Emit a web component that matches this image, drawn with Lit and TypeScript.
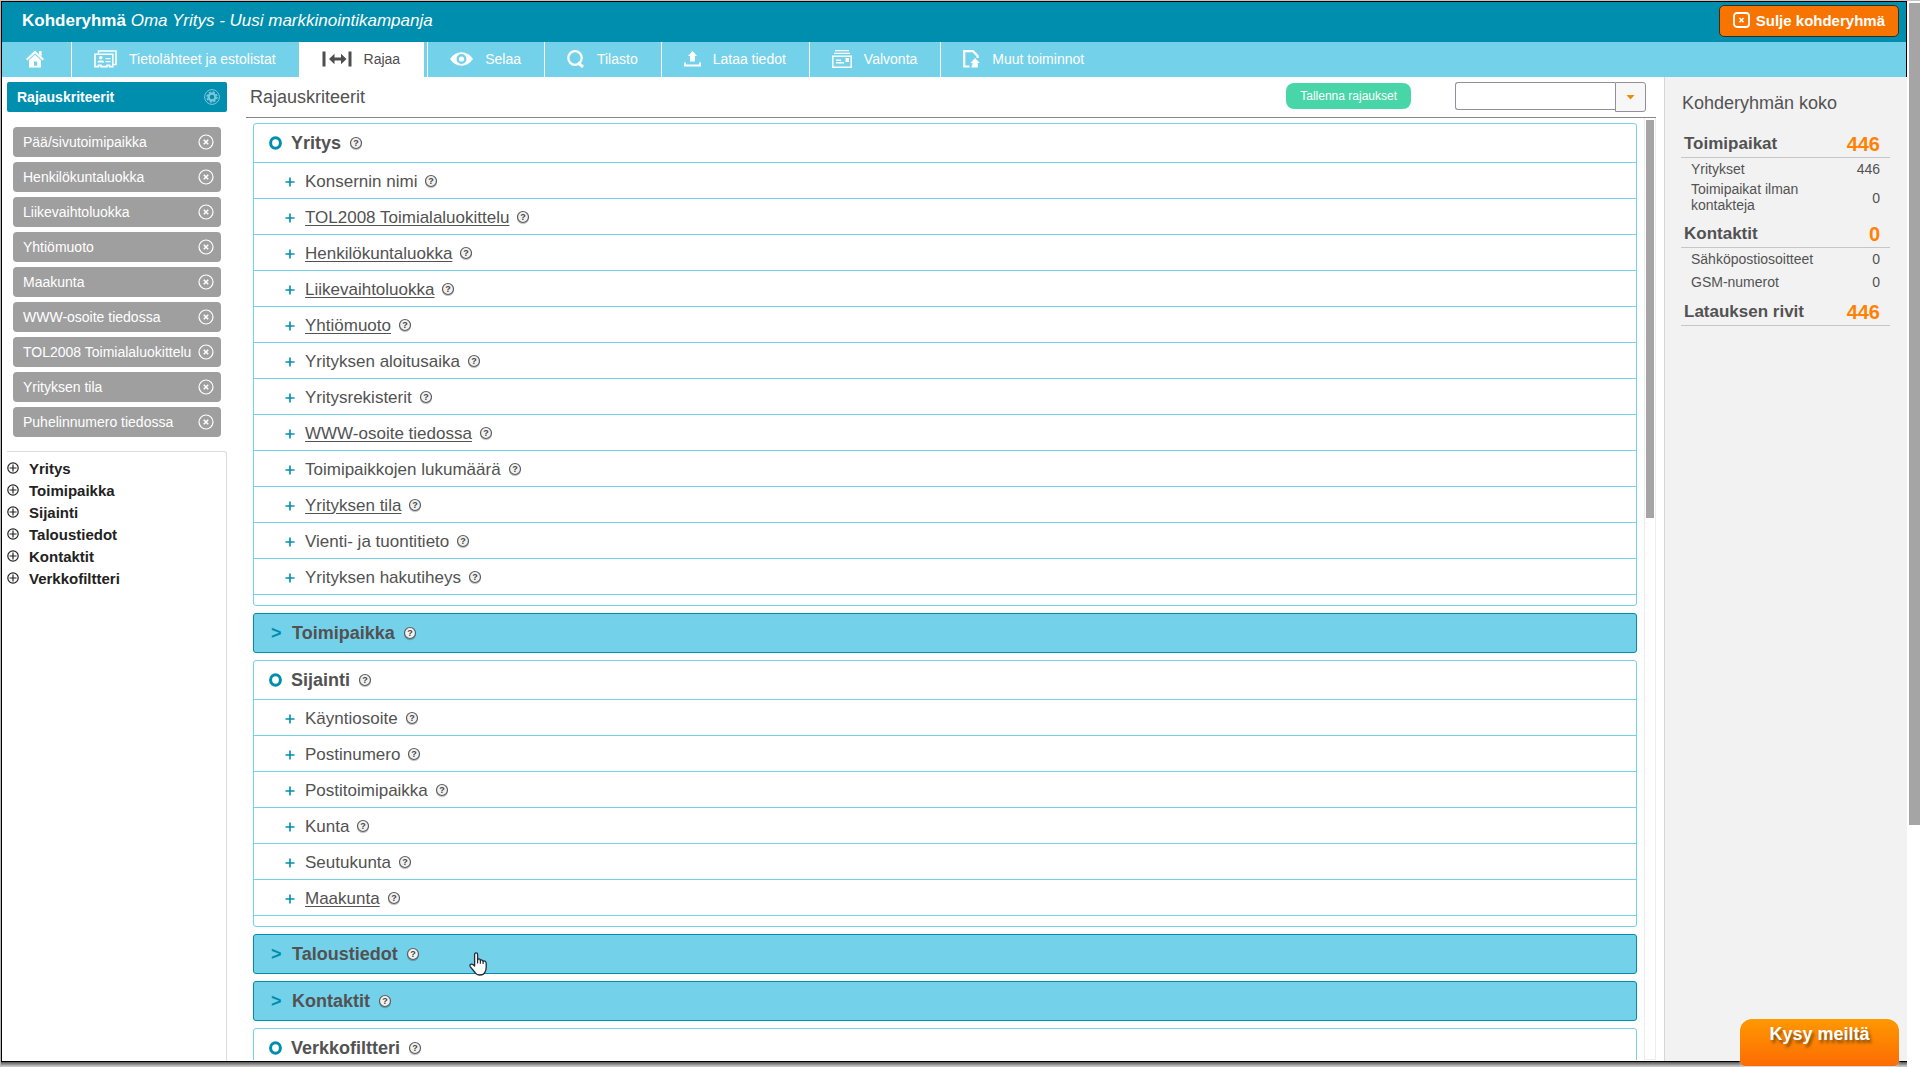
import { LitElement, html, svg, css, nothing } from "lit";
import { customElement, property } from "lit/decorators.js";
import { classMap } from "lit/directives/class-map.js";

interface Criterion {
  name: string;
  active?: boolean;
}
interface Group {
  name: string;
  open: boolean;
  items: Criterion[];
  pointer?: boolean;
}

const on = (name: string): Criterion => ({ name, active: true });
const off = (name: string): Criterion => ({ name });

const GROUPS: Group[] = [
  {
    name: "Yritys",
    open: true,
    items: [
      off("Konsernin nimi"),
      on("TOL2008 Toimialaluokittelu"),
      on("Henkilökuntaluokka"),
      on("Liikevaihtoluokka"),
      on("Yhtiömuoto"),
      off("Yrityksen aloitusaika"),
      off("Yritysrekisterit"),
      on("WWW-osoite tiedossa"),
      off("Toimipaikkojen lukumäärä"),
      on("Yrityksen tila"),
      off("Vienti- ja tuontitieto"),
      off("Yrityksen hakutiheys"),
    ],
  },
  { name: "Toimipaikka", open: false, items: [] },
  {
    name: "Sijainti",
    open: true,
    items: [
      off("Käyntiosoite"),
      off("Postinumero"),
      off("Postitoimipaikka"),
      off("Kunta"),
      off("Seutukunta"),
      on("Maakunta"),
    ],
  },
  { name: "Taloustiedot", open: false, items: [], pointer: true },
  { name: "Kontaktit", open: false, items: [] },
  { name: "Verkkofiltteri", open: true, items: [] },
];

const CHIPS = [
  "Pää/sivutoimipaikka",
  "Henkilökuntaluokka",
  "Liikevaihtoluokka",
  "Yhtiömuoto",
  "Maakunta",
  "WWW-osoite tiedossa",
  "TOL2008 Toimialaluokittelu",
  "Yrityksen tila",
  "Puhelinnumero tiedossa",
];

const TREE = ["Yritys", "Toimipaikka", "Sijainti", "Taloustiedot", "Kontaktit", "Verkkofiltteri"];

const TOTALS = [
  {
    name: "Toimipaikat",
    value: 446,
    rows: [
      ["Yritykset", 446],
      ["Toimipaikat ilman kontakteja", 0],
    ],
  },
  {
    name: "Kontaktit",
    value: 0,
    rows: [
      ["Sähköpostiosoitteet", 0],
      ["GSM-numerot", 0],
    ],
  },
  { name: "Latauksen rivit", value: 446, rows: [] },
];

const icon = (w: number, h: number, body: unknown) =>
  html`<svg width=${w} height=${h} viewBox="0 0 ${w} ${h}" aria-hidden="true">${body}</svg>`;

const ICONS: Record<string, unknown> = {
  home: icon(18, 18, svg`
    <path d="M9 0.5 L18 9 L16.6 10.4 L9 3.4 L1.4 10.4 L0 9 Z M13 1h2.6v5.5l-2.6-2.4z" fill="currentColor"/>
    <path fill-rule="evenodd" d="M3 10.2 L9 4.8 L15 10.2 V17.5 H3 Z M8 11.5 V15.8 H11.2 V11.5 Z" fill="currentColor"/>`),
  cards: icon(23, 18, svg`
    <path d="M4.5 3.5V1H22V14.5H19.5" fill="none" stroke="currentColor" stroke-width="1.6"/>
    <path d="M1 4.2H18.8V16.6H15.5V15.2H13V16.6H7V15.2H4.5V16.6H1Z" fill="none" stroke="currentColor" stroke-width="1.6"/>
    <circle cx="6.8" cy="7.8" r="1.8" fill="currentColor"/>
    <path d="M3.5 12.6Q3.5 10.6 5.6 10.6H8Q10.2 10.6 10.2 12.6Z" fill="currentColor"/>
    <path d="M11.5 8.6H16.5M11.5 11.6H16.5" stroke="currentColor" stroke-width="1.4"/>`),
  limit: icon(30, 16, svg`
    <path d="M0.5 0.5H3.5V15.5H0.5ZM26.5 0.5H29.5V15.5H26.5Z" fill="currentColor"/>
    <path d="M7 8L12.5 2.8V6.6H19V2.8L24.5 8L19 13.2V9.4H12.5V13.2Z" fill="currentColor"/>`),
  eye: icon(23, 14, svg`
    <path fill-rule="evenodd" d="M0 7Q4.5 0.3 11.5 0.3T23 7Q18.5 13.7 11.5 13.7T0 7Z M11.5 2A5 5 0 1 0 11.5 12A5 5 0 1 0 11.5 2Z" fill="currentColor"/>
    <circle cx="11.5" cy="7" r="2.6" fill="currentColor"/>`),
  search: icon(18, 18, svg`
    <ellipse cx="8" cy="8" rx="6.7" ry="6.9" fill="none" stroke="currentColor" stroke-width="2.2"/>
    <path d="M10.8 12.6L16 17" stroke="currentColor" stroke-width="3"/>`),
  upload: icon(17, 16, svg`
    <path d="M8.5 0L13 5H11V10.5H6V5H4Z" fill="currentColor"/>
    <path d="M1 11.5V14.5H16V11.5" fill="none" stroke="currentColor" stroke-width="2"/>`),
  mail: icon(20, 18, svg`
    <path d="M3 0.6H17M2 3.4H18" stroke="currentColor" stroke-width="1.2"/>
    <path d="M0.8 6.2H19.2V17.2H0.8Z" fill="none" stroke="currentColor" stroke-width="1.5"/>
    <path d="M4 10.2H9M4 12.8H12" stroke="currentColor" stroke-width="1.4"/>
    <path d="M13.5 8H17V12H13.5Z" fill="currentColor"/>`),
  page: icon(17, 18, svg`
    <path d="M6.5 16.5H1.2V1.2H10L14.6 6V8" fill="none" stroke="currentColor" stroke-width="2.2"/>
    <path d="M12 8L16.8 13H14.8V17.6H8.5V15.5H9.4V13H7.4Z" fill="currentColor"/>`),
};

const TABS = [
  { icon: "home", label: "", title: "Etusivu" },
  { icon: "cards", label: "Tietolähteet ja estolistat" },
  { icon: "limit", label: "Rajaa", active: true },
  { icon: "eye", label: "Selaa" },
  { icon: "search", label: "Tilasto" },
  { icon: "upload", label: "Lataa tiedot" },
  { icon: "mail", label: "Valvonta" },
  { icon: "page", label: "Muut toiminnot" },
];

const reset = css`
  * {
    box-sizing: border-box;
  }
  button {
    font: inherit;
    color: inherit;
    background: none;
    border: 0;
    margin: 0;
    padding: 0;
    cursor: pointer;
    text-align: left;
  }
  svg {
    display: block;
    flex: none;
  }
  h1,
  h2,
  h3,
  ul {
    margin: 0;
    padding: 0;
    font-weight: inherit;
    font-size: inherit;
    list-style: none;
  }
`;

@customElement("help-button")
export class HelpButton extends LitElement {
  @property() topic = "";

  static styles = [
    reset,
    css`
      :host {
        display: flex;
      }
      .mark {
        font: bold 9px "Liberation Sans", sans-serif;
        fill: #444;
      }
    `,
  ];

  render() {
    return html`<button aria-label="Ohje: ${this.topic}">
      <svg width="14" height="15" viewBox="0 0 14 15">
        <circle cx="7" cy="8.2" r="6" fill="#000" opacity="0.22" />
        <circle cx="7" cy="7" r="5.5" fill="#f1f1f1" stroke="#5c5c5c" stroke-width="1.2" />
        <text class="mark" x="7" y="10" text-anchor="middle">?</text>
      </svg>
    </button>`;
  }
}

@customElement("criteria-group")
export class CriteriaGroup extends LitElement {
  @property({ attribute: false }) group!: Group;

  static styles = [
    reset,
    css`
      :host {
        display: block;
        flex: none;
      }
      .card {
        border: 1px solid #74d1ea;
        border-radius: 3px;
        padding-bottom: 10px;
        color: #525252;
        background: #fff;
      }
      .card.closed {
        position: relative;
        border-color: #008eae;
        background: #74d1ea;
        padding-bottom: 0;
      }
      .head {
        display: flex;
        align-items: center;
        gap: 8px;
        height: 38px;
        padding-left: 15px;
      }
      .toggle {
        display: flex;
        align-items: center;
        gap: 9px;
        font-size: 18px;
        font-weight: bold;
        line-height: 22px;
      }
      .closed .toggle {
        gap: 11px;
      }
      .chevron {
        width: 12px;
        padding-left: 2px;
        color: #008eae;
      }
      .item {
        display: flex;
        align-items: center;
        gap: 7px;
        height: 36px;
        padding: 2px 0 0 31px;
        border-top: 1px solid #74d1ea;
      }
      .item:last-child {
        height: 37px;
        border-bottom: 1px solid #74d1ea;
      }
      .pick {
        display: flex;
        align-items: center;
        gap: 10px;
        font-size: 17px;
        line-height: 20px;
      }
      .active {
        text-decoration: underline;
        text-decoration-thickness: 1px;
        text-underline-offset: 2px;
      }
      .hand {
        position: absolute;
        left: 215px;
        top: 17px;
      }
    `,
  ];

  render() {
    const { name, open, items, pointer } = this.group;
    return html`<section class=${classMap({ card: true, closed: !open })}>
      <div class="head">
        <button class="toggle" aria-expanded=${open}>
          ${open
            ? html`<svg width="13" height="14" viewBox="0 0 13 14" aria-hidden="true">
                <ellipse cx="6.5" cy="7" rx="4.9" ry="5.2" fill="none" stroke="#008eae" stroke-width="3" />
              </svg>`
            : html`<span class="chevron" aria-hidden="true">&gt;</span>`}
          <span>${name}</span>
        </button>
        <help-button .topic=${name}></help-button>
      </div>
      ${items.length
        ? html`<ul>
            ${items.map(
              (item) => html`<li class="item">
                <button class="pick">
                  <svg width="10" height="10" viewBox="0 0 10 10" aria-hidden="true">
                    <path d="M5 0.5V9.5M0.5 5H9.5" stroke="#008eae" stroke-width="1.6" />
                  </svg>
                  <span class=${classMap({ active: !!item.active })}>${item.name}</span>
                </button>
                <help-button .topic=${item.name}></help-button>
              </li>`,
            )}
          </ul>`
        : nothing}
      ${pointer
        ? html`<svg class="hand" width="19" height="24" viewBox="0 0 19 24" aria-hidden="true">
            <path
              d="M5.6 2.6Q5.6 0.9 7.1 0.9T8.6 2.6V8Q9.6 6.2 11 7.2L11.5 8.4Q13.2 7.2 14 9.2Q16.8 8.3 17.2 11.2V15.5Q17.2 18 16 20Q15.2 23 10.8 23Q7.5 23 6 20.5L1.2 14.6Q0.3 12.6 2.2 12.2Q3.8 12 5.6 14Z"
              fill="#fff" stroke="#222b3a" stroke-width="1.3" stroke-linejoin="round" />
            <path d="M8.6 7.5V11.5M11.4 8V11.8M14.1 9V12" stroke="#222b3a" stroke-width="1.2" />
          </svg>`
        : nothing}
    </section>`;
  }
}

@customElement("app-root")
export class AppRoot extends LitElement {
  static styles = [
    reset,
    css`
      :host {
        box-sizing: border-box;
        display: flex;
        gap: 2px;
        height: 100vh;
        overflow: hidden;
        background: #fff;
        color: #525252;
        font-family: "Liberation Sans", Arial, sans-serif;
        border-top: 1px solid #c4c4c4;
      }
      .window {
        flex: 1;
        min-width: 0;
        display: flex;
        flex-direction: column;
        border-left: 1px solid #b5b5b5;
      }
      .frame {
        flex: 1;
        min-height: 0;
        display: flex;
        flex-direction: column;
        border: 1px solid #000;
        border-right: 0;
      }
      .shade {
        height: 5px;
        background: linear-gradient(#555, #d5d5d5);
      }
      .top {
        border-right: 1px solid #000;
      }
      .bar {
        display: flex;
        align-items: center;
        justify-content: space-between;
        height: 40px;
        padding: 0 7px 2px 20px;
        background: #008eae;
        color: #fff;
      }
      .title {
        font-size: 17px;
        line-height: 20px;
      }
      .close {
        display: flex;
        align-items: center;
        gap: 6px;
        height: 32px;
        padding: 0 13px 2px 13px;
        border: 1px solid #3d2a1a;
        border-radius: 5px;
        background: #f87400;
        font-size: 15px;
        font-weight: bold;
      }
      .tabs {
        display: flex;
        height: 35px;
        background: #74d1ea;
        color: #fff;
        font-size: 14px;
      }
      .tab {
        display: flex;
        align-items: center;
        gap: 12px;
        padding: 0 23px 2px 22px;
        border-right: 1px solid #fff;
        color: inherit;
        text-decoration: none;
        white-space: nowrap;
      }
      .tab.home {
        padding: 0 27px 2px 24px;
      }
      .tab:last-child {
        border-right: 0;
      }
      .tab.current {
        background: #fff;
        color: #4e4e4e;
        margin-right: 3px;
      }
      .tab.after {
        border-left: 1px solid #fff;
      }
      .body {
        flex: 1;
        min-height: 0;
        display: flex;
      }
      .side {
        width: 225px;
        flex: none;
        display: flex;
        flex-direction: column;
        padding: 5px 0 0 5px;
      }
      .side-head {
        display: flex;
        align-items: center;
        justify-content: space-between;
        height: 30px;
        padding: 0 7px 0 10px;
        border-radius: 2px;
        background: #008eae;
        color: #fff;
        font-size: 14px;
        font-weight: bold;
      }
      .chips {
        display: flex;
        flex-direction: column;
        gap: 5px;
        padding: 15px 6px 14px;
      }
      .chip {
        display: flex;
        align-items: center;
        justify-content: space-between;
        height: 30px;
        padding: 0 7px 0 10px;
        border-radius: 4px;
        background: #9f9f9f;
        color: #fff;
        font-size: 14px;
        white-space: nowrap;
      }
      .tree {
        flex: 1;
        border: solid #dcdcdc;
        border-width: 1px 1px 0 0;
        border-radius: 0 3px 0 0;
        padding-top: 5px;
      }
      .node {
        display: flex;
        align-items: center;
        gap: 10px;
        height: 22px;
        color: #222;
        font-size: 15px;
        font-weight: bold;
      }
      .main {
        flex: 1;
        min-width: 0;
        display: flex;
        flex-direction: column;
        padding: 0 8px 1px 19px;
      }
      .main-head {
        display: flex;
        align-items: flex-start;
        height: 41px;
        padding: 5px 10px 0 4px;
        border-bottom: 1px solid #868686;
      }
      .main-title {
        flex: 1;
        font-size: 18px;
        line-height: 30px;
      }
      .save {
        height: 26px;
        margin: 1px 44px 0 0;
        padding: 0 14px;
        border-radius: 8px;
        background: #48d6a8;
        color: #fff;
        font-size: 12px;
      }
      .combo {
        display: flex;
        align-items: flex-start;
      }
      .field {
        width: 160px;
        height: 28px;
        padding: 0 6px;
        border: 1px solid #90909c;
        border-right: 0;
        border-radius: 3px 0 0 3px;
        background: #fff;
        font: 14px "Liberation Sans", sans-serif;
        outline: 0;
      }
      .drop {
        display: flex;
        align-items: center;
        justify-content: center;
        width: 31px;
        height: 30px;
        border: 1px solid #90909c;
        border-radius: 0 3px 3px 0;
        background: #f7f7f7;
      }
      .scroll {
        flex: 1;
        min-height: 0;
        display: flex;
        gap: 7px;
        overflow: hidden;
      }
      .groups {
        flex: 1;
        min-width: 0;
        display: flex;
        flex-direction: column;
        gap: 7px;
        padding: 5px 0 0 7px;
        overflow: hidden;
      }
      .track {
        width: 12px;
        border: solid #ededed;
        border-width: 0 1px 1px;
        padding: 2px 1px 0;
      }
      .thumb {
        height: 398px;
        background: #a5a5a5;
      }
      .summary {
        width: 243px;
        flex: none;
        padding: 13px 17px 0 16px;
        border-left: 1px solid #d6d6d6;
        background: #f2f2f2;
      }
      .summary-title {
        font-size: 18px;
        line-height: 26px;
        padding-left: 1px;
      }
      .sizes {
        width: 100%;
        margin-top: 9px;
        border-collapse: collapse;
        font-size: 14px;
        line-height: 16px;
      }
      .sizes th,
      .sizes td {
        padding: 0 10px;
        height: 23px;
        font-weight: normal;
        text-align: left;
      }
      .sizes td {
        text-align: right;
      }
      .sizes .tall th {
        padding: 1px 10px 2px;
      }
      .sizes .total th,
      .sizes .total td {
        height: 32px;
        padding-top: 6px;
        border-bottom: 1px solid #c6c6c6;
        font-weight: bold;
      }
      .sizes .total th {
        padding-left: 3px;
        padding-right: 0;
        font-size: 17px;
      }
      .sizes .total td {
        color: #ff8204;
        font-size: 20px;
      }
      .page-track {
        width: 11px;
        flex: none;
        padding-top: 2px;
      }
      .page-thumb {
        height: 822px;
        background: #a5a5a5;
      }
      .ask {
        position: absolute;
        right: 21px;
        bottom: 1px;
        width: 159px;
        height: 47px;
        padding-bottom: 16px;
        border-radius: 12px 12px 5px 5px;
        background: linear-gradient(#ff9800, #fc6c04);
        box-shadow: 0 0 2px #fff;
        color: #fff;
        font-size: 18px;
        font-weight: bold;
        text-align: center;
        text-shadow: 2px 3px 3px rgba(90, 60, 20, 0.75);
      }
    `,
  ];

  render() {
    return html`
      <div class="window">
        <div class="frame">
          <header class="top">
            <div class="bar">
              <h1 class="title"><b>Kohderyhmä</b> <i>Oma Yritys - Uusi markkinointikampanja</i></h1>
              <button class="close">
                <svg width="17" height="16" viewBox="0 0 17 16" aria-hidden="true">
                  <rect x="1" y="1" width="15" height="14" rx="3" fill="none" stroke="#fff" stroke-width="1.8" />
                  <path d="M6.5 6L10.5 10.2M10.5 6L6.5 10.2" stroke="#fff" stroke-width="1.5" />
                </svg>
                <span>Sulje kohderyhmä</span>
              </button>
            </div>
            <nav class="tabs">
              ${TABS.map(
                (tab, i) => html`<a
                  href="#"
                  class=${classMap({
                    tab: true,
                    home: i === 0,
                    current: !!tab.active,
                    after: i > 0 && !!TABS[i - 1].active,
                  })}
                  aria-label=${tab.label || tab.title || ""}
                  >${ICONS[tab.icon]}${tab.label ? html`<span>${tab.label}</span>` : nothing}</a
                >`,
              )}
            </nav>
          </header>
          <div class="body">
            <aside class="side">
              <div class="side-head">
                <h2>Rajauskriteerit</h2>
                <button aria-label="Asetukset">
                  <svg width="16" height="16" viewBox="0 0 16 16" fill="none" stroke="#7cc8dc">
                    <circle cx="8" cy="8" r="7.4" stroke-width="1" />
                    <circle cx="8" cy="8" r="3.4" stroke-width="2.2" />
                    <circle cx="8" cy="8" r="5" stroke-width="1.4" stroke-dasharray="2.2 1.73" />
                  </svg>
                </button>
              </div>
              <div class="chips">
                ${CHIPS.map(
                  (name) => html`<div class="chip">
                    <span>${name}</span>
                    <button aria-label="Poista ${name}">
                      <svg width="16" height="16" viewBox="0 0 16 16" fill="none" stroke="#fff">
                        <circle cx="8" cy="8" r="7" stroke-width="1.2" />
                        <path d="M5.8 5.8L10.2 10.2M10.2 5.8L5.8 10.2" stroke-width="1.6" />
                      </svg>
                    </button>
                  </div>`,
                )}
              </div>
              <div class="tree">
                ${TREE.map(
                  (name) => html`<button class="node">
                    <svg width="12" height="12" viewBox="0 0 12 12" fill="none" stroke="#222" aria-hidden="true">
                      <circle cx="6" cy="6" r="5.2" stroke-width="1.2" />
                      <path d="M6 2.5V9.5M2.5 6H9.5" stroke-width="1.2" />
                    </svg>
                    <span>${name}</span>
                  </button>`,
                )}
              </div>
            </aside>
            <main class="main">
              <div class="main-head">
                <h2 class="main-title">Rajauskriteerit</h2>
                <button class="save">Tallenna rajaukset</button>
                <div class="combo">
                  <input class="field" type="text" aria-label="Tallennettu rajaus" />
                  <button class="drop" aria-label="Avaa lista">
                    <svg width="9" height="5" viewBox="0 0 9 5"><path d="M0.5 0H8.5L4.5 4.6Z" fill="#f08c00" /></svg>
                  </button>
                </div>
              </div>
              <div class="scroll">
                <div class="groups">
                  ${GROUPS.map((g) => html`<criteria-group .group=${g}></criteria-group>`)}
                </div>
                <div class="track"><div class="thumb"></div></div>
              </div>
            </main>
            <aside class="summary">
              <h2 class="summary-title">Kohderyhmän koko</h2>
              <table class="sizes">
                ${TOTALS.map(
                  (t) => html`<tbody>
                    <tr class="total">
                      <th scope="row">${t.name}</th>
                      <td>${t.value}</td>
                    </tr>
                    ${t.rows.map(
                      ([name, value]) => html`<tr class=${String(name).length > 20 ? "tall" : ""}>
                        <th scope="row">${name}</th>
                        <td>${value}</td>
                      </tr>`,
                    )}
                  </tbody>`,
                )}
              </table>
            </aside>
          </div>
        </div>
        <div class="shade"></div>
      </div>
      <div class="page-track"><div class="page-thumb"></div></div>
      <button class="ask">Kysy meiltä</button>
    `;
  }
}
